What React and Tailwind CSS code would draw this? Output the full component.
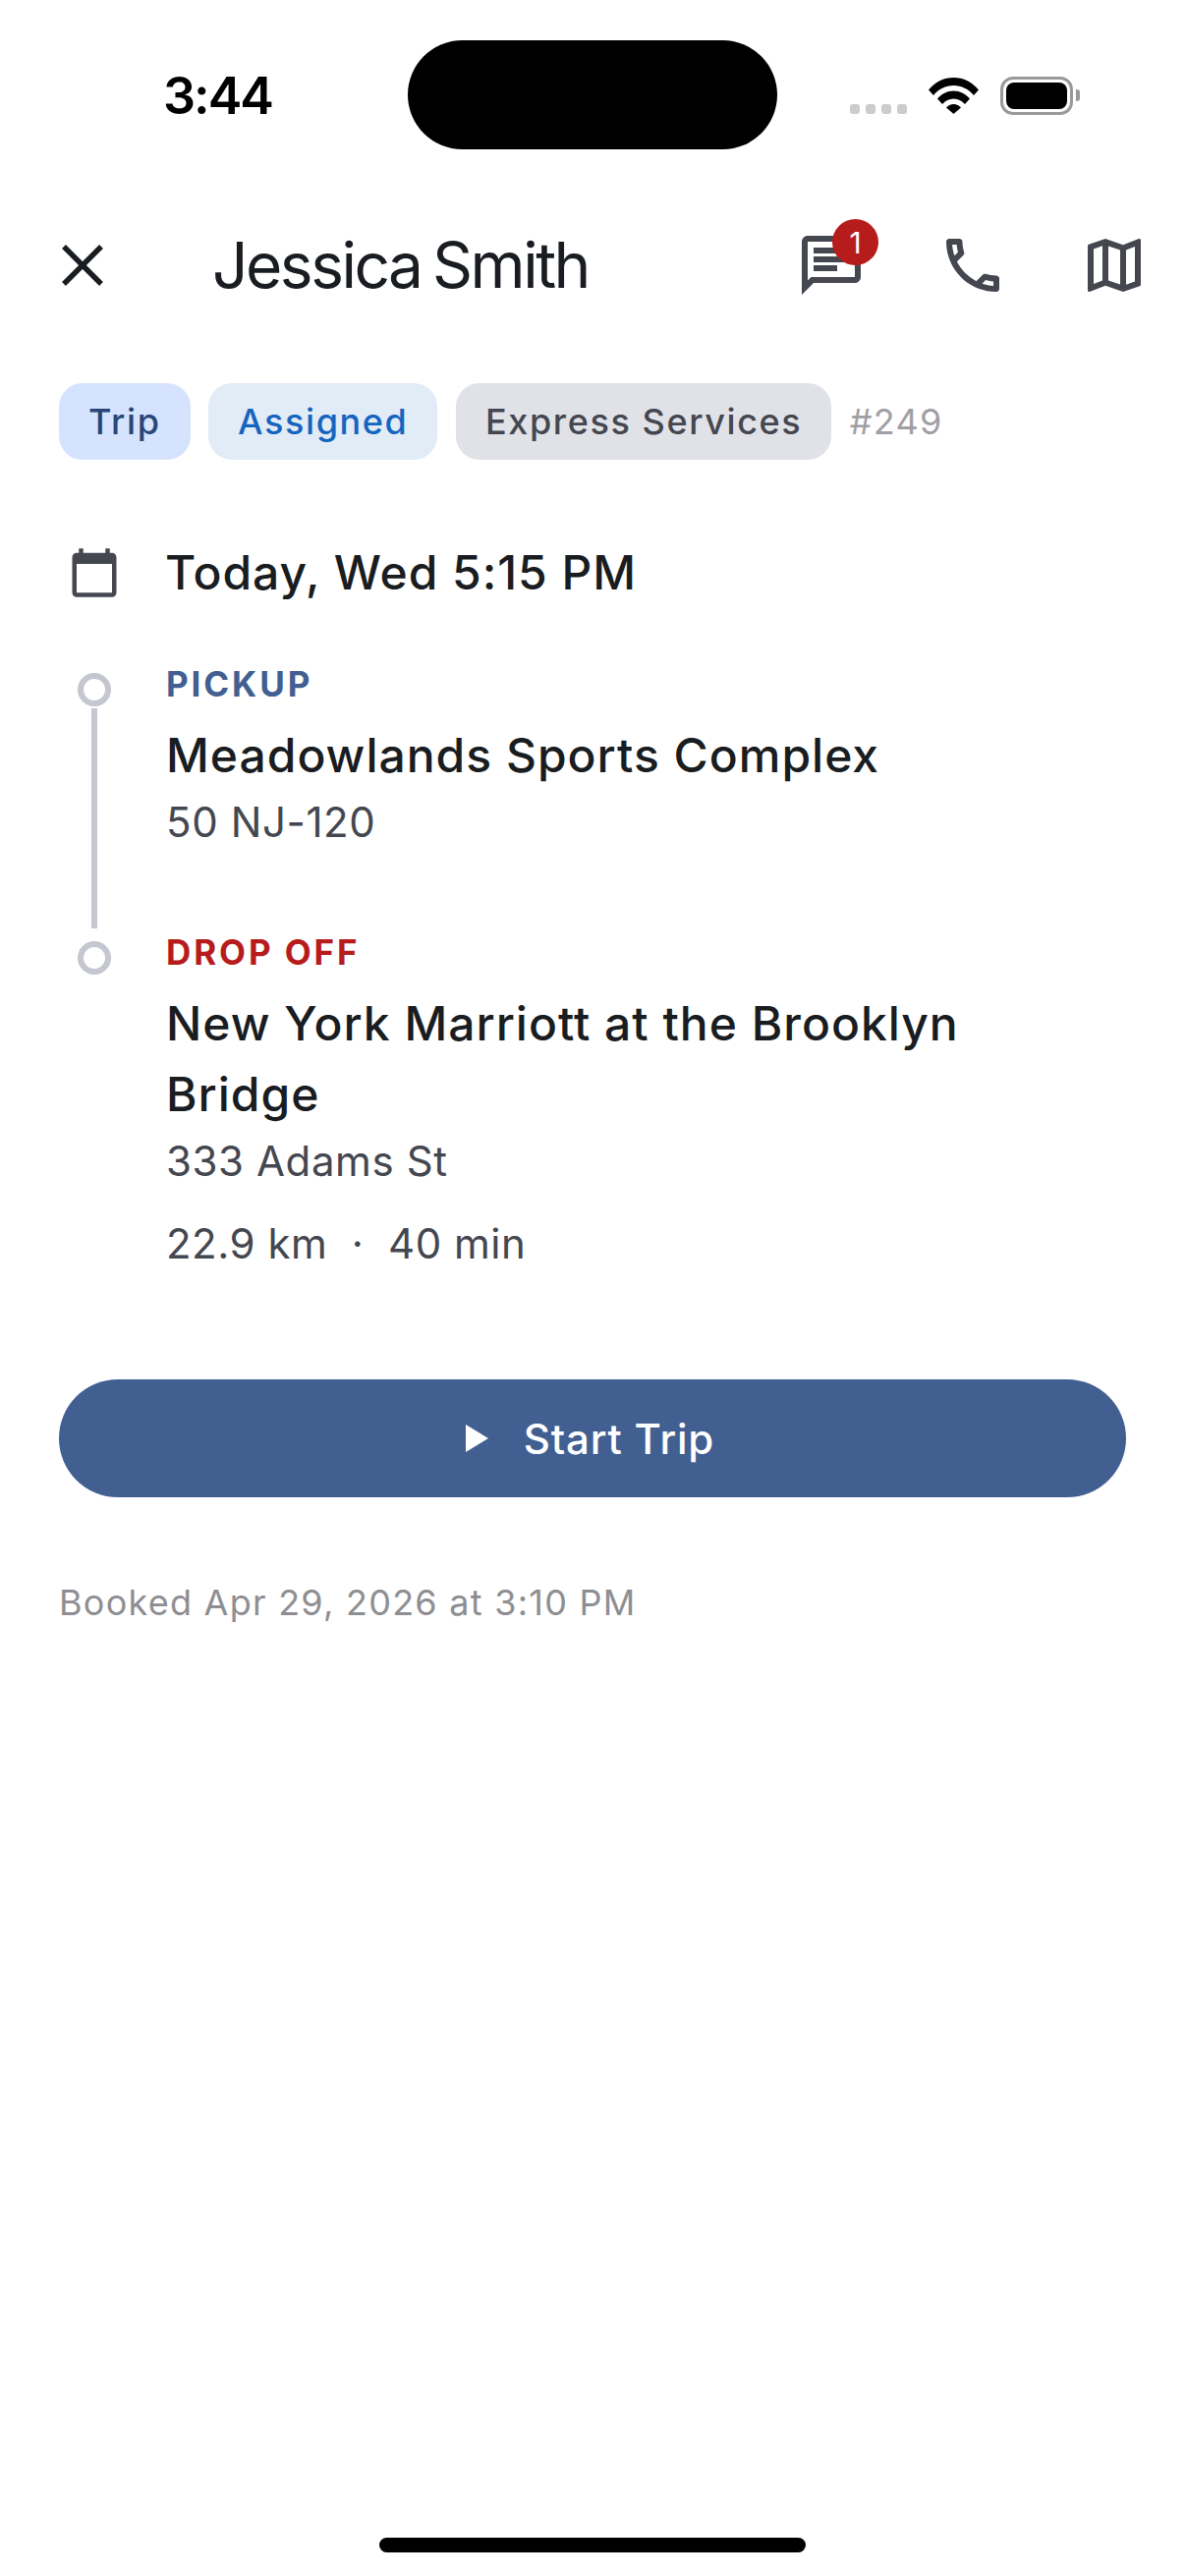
import React from "react";

function MdIcon({ d, className }) {
  return (
    <svg viewBox="0 0 24 24" className={className} fill="currentColor">
      <path d={d} />
    </svg>
  );
}

const chatPath = "M20 2H4c-1.1 0-2 .9-2 2v18l4-4h14c1.1 0 2-.9 2-2V4c0-1.1-.9-2-2-2zm0 14H5.17L4 17.17V4h16v12zM6 12h8v2H6zm0-3h12v2H6zm0-3h12v2H6z";
const phonePath = "M6.54 5c.06.89.21 1.76.45 2.59l-1.2 1.2c-.41-1.2-.67-2.47-.76-3.79h1.51m9.86 12.02c.85.24 1.72.39 2.6.45v1.49c-1.32-.09-2.59-.35-3.8-.75l1.2-1.19M7.5 3H4c-.55 0-1 .45-1 1 0 9.39 7.61 17 17 17 .55 0 1-.45 1-1v-3.49c0-.55-.45-1-1-1-1.24 0-2.45-.2-3.57-.57-.1-.04-.21-.05-.31-.05-.26 0-.51.1-.71.29l-2.2 2.2c-2.83-1.45-5.15-3.76-6.59-6.59l2.2-2.2c.28-.28.36-.67.25-1.02C8.7 6.45 8.5 5.25 8.5 4c0-.55-.45-1-1-1z";
const mapPath = "M20.5 3l-.16.03L15 5.1 9 3 3.36 4.9c-.21.07-.36.25-.36.48V20.5c0 .28.22.5.5.5l.16-.03L9 18.9l6 2.1 5.64-1.9c.21-.07.36-.25.36-.48V3.5c0-.28-.22-.5-.5-.5zM10 5.47l4 1.4v11.66l-4-1.4V5.47zm-5 .99l3-1.01v11.7l-3 1.16V6.46zm14 11.08l-3 1.01V6.86l3-1.16v11.84z";
const calendarPath = "M20 3h-1V1h-2v2H7V1H5v2H4c-1.1 0-2 .9-2 2v16c0 1.1.9 2 2 2h16c1.1 0 2-.9 2-2V5c0-1.1-.9-2-2-2zm0 18H4V8h16v13z";

function StatusBar() {
  return (
    <div className="flex h-[198px] items-start">
      <div className="w-[415px] pl-[166px] pt-[66px] text-[52px] leading-[64px] font-semibold tracking-[-2px] text-black">3:44</div>
      <div className="mt-[41px] h-[111px] w-[376px] rounded-[56px] bg-black" />
      <div className="ml-[74px] mt-[78px] flex h-[39px] items-end">
        <div className="mb-[1px] flex gap-[6px]">
          <span className="h-[10px] w-[10px] rounded-[3px] bg-[#cccccc]" />
          <span className="h-[10px] w-[10px] rounded-[3px] bg-[#cccccc]" />
          <span className="h-[10px] w-[10px] rounded-[3px] bg-[#cccccc]" />
          <span className="h-[10px] w-[10px] rounded-[3px] bg-[#cccccc]" />
        </div>
        {/* wifi */}
        <svg viewBox="0 0 51 37" className="mb-[1px] ml-[22px] h-[37px] w-[51px]" fill="black">
          <path d="M0 12.5C6.5 4.6 15.5 0 25.5 0S44.500 4.600 51 12.500L46 18C40.800 11.800 33.600 8 25.500 8S10.200 11.800 5 18z" />
          <path d="M9 21.500C13.200 16.500 19 13.500 25.500 13.500S37.800 16.500 42 21.500L37 27C34 23.600 30 21.500 25.500 21.500S17 23.600 14 27z" />
          <path d="M18 30.500C20 28.200 22.600 27 25.500 27S31 28.200 33 30.500L25.500 37z" />
        </svg>
        <div className="ml-[22px] flex h-[39px] w-[74px] items-center justify-center rounded-[13px] border-[3px] border-[#999999]">
          <div className="h-[27px] w-[62px] rounded-[8px] bg-black" />
        </div>
        <div className="mb-[14px] ml-[3px] h-[12px] w-[4px] rounded-r-[3px] bg-[#999999]" />
      </div>
    </div>
  );
}

function Header() {
  return (
    <div className="flex h-[144px] items-center">
      <button className="ml-[12px] flex h-[144px] w-[144px] items-center justify-center text-[#191c20]">
        <svg viewBox="0 0 42 42" className="h-[42px] w-[42px]" stroke="currentColor" strokeWidth="5.500" fill="none">
          <path d="M2 2l38 38M40 2L2 40" />
        </svg>
      </button>
      <div className="ml-[60px] text-[64px] leading-[80px] tracking-[-2.500px] [word-spacing:-4px] text-[#191c20]">Jessica Smith</div>
      <div className="ml-auto flex text-[#44474f]">
        <button className="relative flex h-[144px] w-[144px] items-center justify-center">
          <MdIcon d={chatPath} className="h-[72px] w-[72px]" />
          <span className="absolute left-[73px] top-[25px] flex h-[47px] w-[47px] items-center justify-center rounded-full bg-[#b71c1c] text-[30px] leading-none text-white">1</span>
        </button>
        <button className="flex h-[144px] w-[144px] items-center justify-center">
          <MdIcon d={phonePath} className="h-[72px] w-[72px]" />
        </button>
        <button className="flex h-[144px] w-[144px] items-center justify-center">
          <MdIcon d={mapPath} className="h-[72px] w-[72px]" />
        </button>
      </div>
    </div>
  );
}

function Chip({ label, className }) {
  return (
    <span className={"flex h-[78px] items-center rounded-[24px] px-[30px] text-[36px] font-medium leading-none tracking-[1.600px] " + className}>
      {label}
    </span>
  );
}

function Stop({ label, labelColor, name, address, last, children }) {
  return (
    <div className="flex">
      <div className="flex w-[109px] flex-col items-center pr-[37px]">
        <span className="mt-[13px] h-[34px] w-[34px] shrink-0 rounded-full border-[6px] border-[#c4c6d0]" />
        {!last && <span className="mt-[2px] w-[6px] flex-1 bg-[#c4c6d0]" />}
      </div>
      <div className={"flex-1 pr-[60px] " + (last ? "" : "pb-[78px]")}>
        <div className={"text-[35px] font-bold leading-[48px] tracking-[2.900px] " + labelColor}>{label}</div>
        <div className="mt-[13px] text-[48px] font-medium leading-[72px] tracking-[1px] text-[#191c20]">{name}</div>
        <div className="mt-[2px] text-[42px] leading-[60px] tracking-[0.600px] text-[#44474f]">{address}</div>
        {children}
      </div>
    </div>
  );
}

export default function App() {
  return (
    <div className="flex min-h-screen flex-col bg-white font-['Inter',sans-serif]">
      <StatusBar />
      <Header />

      <div className="mt-[48px] flex items-center gap-[18.500px] px-[60px]">
        <Chip label="Trip" className="bg-[#d6e3ff] text-[#284777]" />
        <Chip label="Assigned" className="bg-[#e2ecf7] text-[#1565c0]" />
        <Chip label="Express Services" className="bg-[#e1e2e8] text-[#44474f]" />
        <span className="text-[36px] leading-none tracking-[1.200px] text-[#a0a0a4]">#249</span>
      </div>

      <div className="mt-[85px] flex items-center px-[60px]">
        <div className="w-[108px] pl-[9px] text-[#44474f]">
          <MdIcon d={calendarPath} className="h-[54px] w-[54px]" />
        </div>
        <div className="text-[48px] font-medium leading-[60px] tracking-[0.950px] text-[#191c20]">Today, Wed 5:15 PM</div>
      </div>

      <div className="mt-[59px] px-[60px]">
        <Stop label="PICKUP" labelColor="text-[#415f91]" name="Meadowlands Sports Complex" address="50 NJ-120" />
        <Stop label="DROP OFF" labelColor="text-[#b71c1c]" name="New York Marriott at the Brooklyn Bridge" address="333 Adams St" last>
          <div className="mt-[24px] text-[42px] leading-[60px] tracking-[0.500px] text-[#44474f]">22.9 km &nbsp;·&nbsp; 40 min</div>
        </Stop>
      </div>

      <div className="mt-[108px] px-[60px]">
        <button className="flex h-[120px] w-full items-center justify-center rounded-full bg-[#415f91] pr-[5px] text-[42px] font-medium tracking-[0.800px] text-white">
          <svg viewBox="0 0 23 28" className="mr-[36px] h-[28px] w-[23px]" fill="white">
            <path d="M0 0l23 14L0 28z" />
          </svg>
          Start Trip
        </button>
      </div>

      <div className="mt-[77px] px-[60px] text-[36px] leading-[60px] tracking-[1.250px] text-[#8e8e92]">Booked Apr 29, 2026 at 3:10 PM</div>

      <div className="mt-auto flex justify-center pb-[24px]">
        <div className="h-[15px] w-[434px] rounded-full bg-black" />
      </div>
    </div>
  );
}
